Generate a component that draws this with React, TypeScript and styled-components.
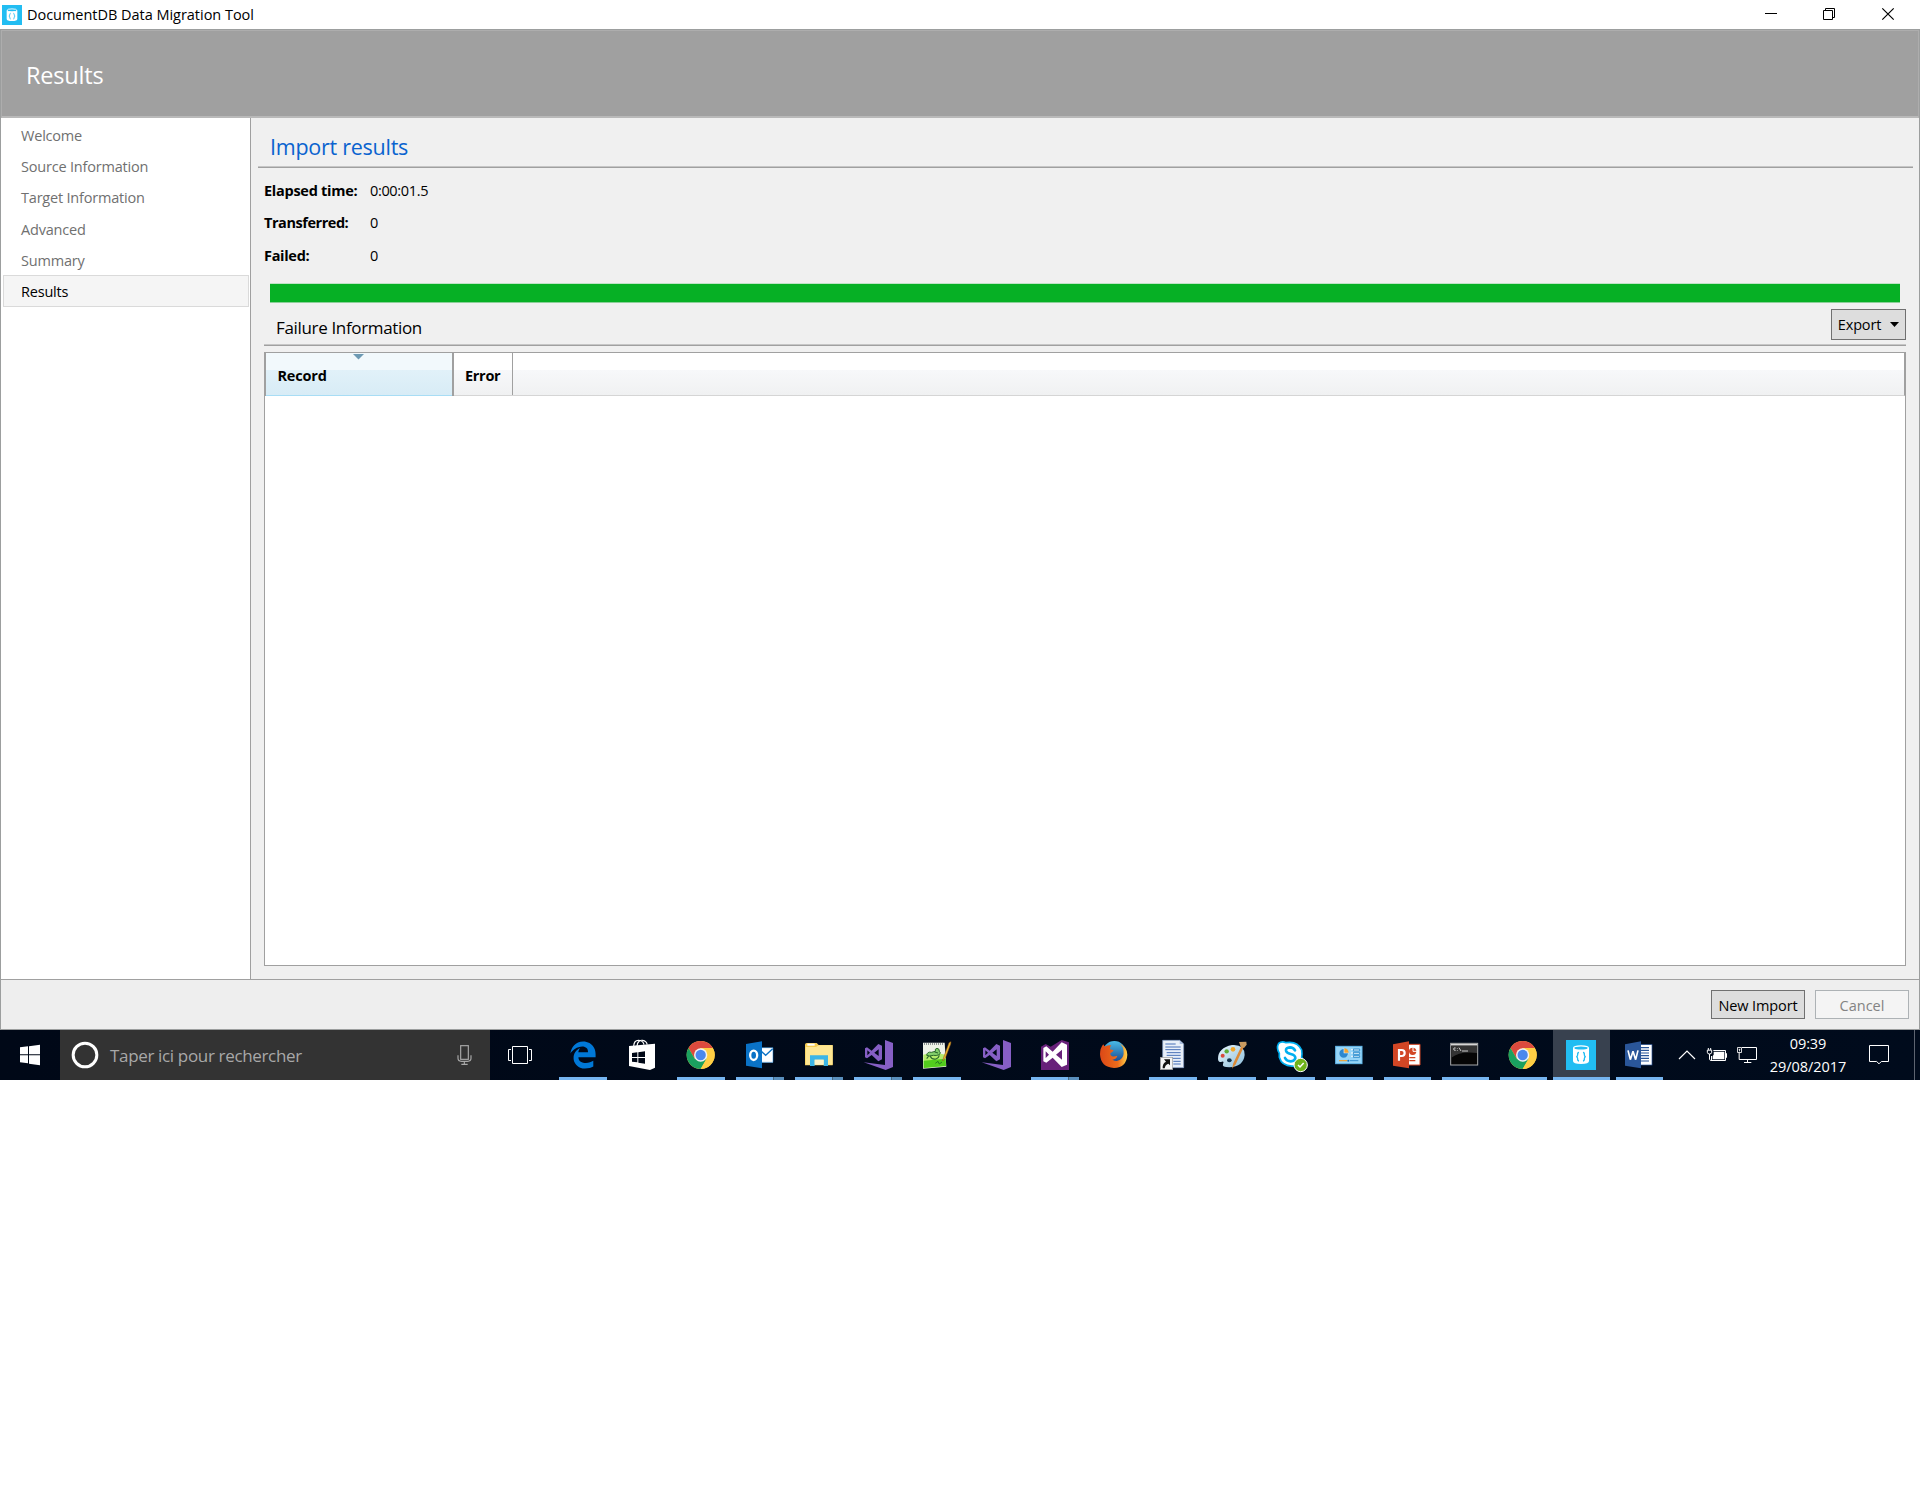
import React from "react";
import styled, { createGlobalStyle } from "styled-components";
import { FaEdgeLegacy } from "react-icons/fa";

const GlobalStyle = createGlobalStyle`
  * { box-sizing: border-box; }
  html, body { margin: 0; background: #fff; }
  body { font-family: "Open Sans", "Noto Sans", sans-serif; color: #000; }
`;

const Label = styled.span<{ $size?: number; $track?: number; $bold?: boolean; $color?: string }>`
  display: block;
  white-space: nowrap;
  font-size: ${(p) => p.$size ?? 14.5}px;
  letter-spacing: ${(p) => p.$track ?? 0}px;
  font-weight: ${(p) => (p.$bold ? 700 : 400)};
  color: ${(p) => p.$color ?? "#000"};
`;

const Screen = styled.div`
  width: 1920px;
  height: 1500px;
  overflow: hidden;
  display: flex;
  flex-direction: column;
  background: #fff;
`;

const TitleBar = styled.div`
  height: 29px;
  flex: none;
  display: flex;
  align-items: center;
  padding-left: 2px;
  gap: 5px;
`;

const WindowTitle = styled.div`
  padding-bottom: 1px;
`;

const WindowControls = styled.div`
  display: flex;
  margin-left: auto;
  padding-right: 2px;
`;

const ControlIcon = styled.svg`
  width: 59px;
  height: 29px;
  display: block;
`;

const WindowBody = styled.div`
  height: 1001px;
  flex: none;
  display: flex;
  flex-direction: column;
  border: 1px solid #9c9e9e;
  background: #f0f0f0;
`;

const Header = styled.header`
  height: 88px;
  flex: none;
  display: flex;
  align-items: center;
  padding: 2px 0 0 24px;
  background: #a0a0a0;
  border: 1px solid #adadad;
  border-bottom: 2px solid #b9b9b9;
`;

const Main = styled.div`
  flex: 1;
  display: flex;
  min-height: 0;
`;

const Sidebar = styled.nav`
  width: 250px;
  flex: none;
  background: #fff;
  border-right: 1px solid #a0a0a0;
  padding: 1px 1px 0 2px;
`;

const NavItem = styled.div<{ $active?: boolean }>`
  height: 31.25px;
  display: flex;
  align-items: center;
  padding: 1.5px 0 0 17px;
  border: 1px solid ${(p) => (p.$active ? "#dadada" : "transparent")};
  background: ${(p) => (p.$active ? "#f5f5f5" : "transparent")};
`;

const Content = styled.section`
  flex: 1;
  display: flex;
  flex-direction: column;
  padding: 0 6px 13px 7px;
`;

const PageTitle = styled.div`
  height: 50px;
  flex: none;
  display: flex;
  align-items: center;
  padding: 7px 0 0 12px;
  border-bottom: 1px solid #a0a0a0;
  box-shadow: inset 0 -1px 0 #c6c6c6;
`;

const Stats = styled.dl`
  margin: 6px 0 0 6px;
  display: grid;
  grid-template-columns: 106px auto;
  grid-auto-rows: 32.5px;
  align-items: center;
`;

const Term = styled.dt`
  margin: 0;
`;

const Value = styled.dd`
  margin: 0;
`;

const Progress = styled.div`
  margin: 11.5px 13px 0 12px;
  height: 20px;
  flex: none;
  background: #06b025;
  border-top: 1px solid #bfe3c6;
  border-bottom: 1px solid #8ccf99;
`;

const SectionHeader = styled.div`
  margin: 0 7px 0 6px;
  height: 43px;
  flex: none;
  display: flex;
  align-items: flex-start;
  justify-content: space-between;
  padding: 6px 0 0 12px;
  border-bottom: 1px solid #a0a0a0;
  box-shadow: inset 0 -1px 0 #c6c6c6;
`;

const SectionTitle = styled.div`
  padding-top: 7px;
`;

const Button = styled.button<{ $w: number; $h: number; $drop?: number; $disabled?: boolean }>`
  width: ${(p) => p.$w}px;
  height: ${(p) => p.$h}px;
  padding: ${(p) => p.$drop ?? 0}px 0 0;
  display: flex;
  align-items: center;
  justify-content: center;
  gap: 9px;
  font-family: inherit;
  border: 1px solid ${(p) => (p.$disabled ? "#adb2b5" : "#707070")};
  background: ${(p) => (p.$disabled ? "#f4f4f4" : "#dddddd")};
`;

const Caret = styled.svg`
  width: 9px;
  height: 5px;
  display: block;
`;

const Table = styled.div`
  margin: 6px 7px 0 6px;
  flex: 1;
  border: 1px solid #a0a0a0;
  background: #fff;
`;

const TableHead = styled.div`
  height: 43px;
  display: flex;
  border-right: 1px solid #a0a0a0;
  background: linear-gradient(#fff 0 17px, #f7f8fa 17px, #f0f1f2 42px);
  border-bottom: 1px solid #d5d5d5;
`;

const RecordCell = styled.div`
  width: 189px;
  height: 43px;
  display: flex;
  flex-direction: column;
  padding-left: 11.5px;
  border-left: 1px solid #a0a0a0;
  border-right: 2px solid #a0a0a0;
  background: linear-gradient(#f2f9fc 0 17px, #e1f1f9 17px, #d8ecf6 42px, #a8ddf5 42px);
`;

const SortMark = styled.svg`
  width: 11px;
  height: 6px;
  margin: 1px 0 6px 75.5px;
  display: block;
`;

const ErrorCell = styled.div`
  width: 59px;
  padding: 13px 0 0 11px;
  border-right: 1px solid #a0a0a0;
`;

const Footer = styled.footer`
  height: 50px;
  flex: none;
  display: flex;
  align-items: center;
  justify-content: flex-end;
  gap: 10px;
  padding-right: 10px;
  border-top: 1px solid #a0a0a0;
  background: #eee;
`;

const Taskbar = styled.div`
  height: 50px;
  flex: none;
  display: flex;
  background: linear-gradient(90deg, #000817, #000b1c);
`;

const StartButton = styled.div`
  width: 60px;
`;

const SearchBox = styled.div`
  width: 430px;
  display: flex;
  align-items: center;
  background: #333;
`;

const Glyph = styled.svg<{ $w: number; $h?: number }>`
  width: ${(p) => p.$w}px;
  height: ${(p) => p.$h ?? 50}px;
  flex: none;
  display: block;
`;

const MicGlyph = styled(Glyph)`
  margin-left: auto;
`;

const AppButton = styled.div<{ $w: number; $active?: boolean }>`
  width: ${(p) => p.$w}px;
  display: flex;
  flex-direction: column;
  background: ${(p) => (p.$active ? "#38414f" : "transparent")};
`;

const Running = styled.div<{ $inset: number; $w: number; $stacked?: boolean }>`
  height: 3px;
  margin-left: ${(p) => p.$inset}px;
  width: ${(p) => p.$w}px;
  background: ${(p) => (p.$stacked ? "linear-gradient(90deg, #76b5f0 37px, #47687f 37px 38px, #5a8fbd 38px)" : "#76b5f0")};
`;

const EdgeWrap = styled.div`
  height: 47px;
  display: flex;
  padding: 11px 0 0 15px;
`;

const Clock = styled.div`
  width: 102px;
  display: flex;
  flex-direction: column;
  align-items: center;
  padding-top: 2px;
  line-height: 23px;
`;

const ShowDesktop = styled.div`
  margin-left: auto;
  width: 6px;
  border-left: 1px solid #5d6470;
`;

/* Icon artwork uses a grid three times finer than the pixel grid. */

const ChromeArt = ({ cx, cy }: { cx: number; cy: number }) => (
  <g transform={`translate(${cx} ${cy})`}>
    <circle r="42" fill="#ffce44" />
    <path d="M-36.4 -21A42 42 0 0 1 36.4 -21L0 -21L-18.2 10.5Z" fill="#dc4a3e" />
    <path d="M-36.4 -21A42 42 0 0 0 0 42L18.2 10.5L-18.2 10.5Z" fill="#1aa15f" />
    <path d="M36.4 -21A42 42 0 0 1 0 42L18.2 10.5L0 -21Z" fill="#ffce44" />
    <circle r="20" fill="#f1f1f1" />
    <circle r="15.5" fill="#4a88ee" />
  </g>
);

const VsArt = ({ dx = 0 }: { dx?: number }) => (
  <g transform={`translate(${dx} 0)`} fill="#865fc5">
    <path d="M855 60L879 69V141L857 150L791 127L855 135Z" />
    <path fillRule="evenodd" d="M795 85L801 82L815 92L835 72L846 77V118L835 124L815 105L801 115L795 112ZM802 91V106L810 98ZM823 98L836 108V88Z" />
  </g>
);

const DbArt = ({ cx, cy }: { cx: number; cy: number }) => (
  <g transform={`translate(${cx} ${cy})`}>
    <rect x="-45" y="-45" width="90" height="90" fill="#22bdf2" />
    <path d="M-24 -21V18Q-24 27 0 27Q24 27 24 18V-21Z" fill="#fff" />
    <ellipse cy="-21" rx="22" ry="6.500" fill="#22bdf2" stroke="#fff" strokeWidth="4" />
    <path d="M-6 -8Q-11 -7 -10 -1Q-10 4 -14 5Q-10 6 -10 11Q-11 17 -6 18M6 -8Q11 -7 10 -1Q10 4 14 5Q10 6 10 11Q11 17 6 18" fill="none" stroke="#22bdf2" strokeWidth="4" />
  </g>
);

type AppEntry = { name: string; w: number; crop: number; x: number; art?: React.ReactNode; run?: "one" | "many" | "full" };

const apps: AppEntry[] = [
  { name: "edge", w: 59, crop: 300, x: 554, run: "one" },
  {
    name: "store", w: 59, crop: 600, x: 613,
    art: (
      <g>
        <path d="M101 78C103 52 130 60 132 74M111 78C114 50 143 62 141 74" fill="none" stroke="#fff" strokeWidth="3.500" />
        <path d="M87 78L165 71V143L150 150L87 138Z" fill="#fff" />
        <path d="M96 99L112 97V111H96ZM115 96.500L135 94V111H115ZM96 114H112V127L96 125ZM115 114H135V131L115 128Z" fill="#000817" />
      </g>
    ),
  },
  { name: "chrome", w: 59, crop: 600, x: 672, run: "one", art: <ChromeArt cx={302} cy={105} /> },
  {
    name: "outlook", w: 59, crop: 600, x: 731, run: "many",
    art: (
      <g>
        <rect x="480" y="83" width="39" height="45" fill="#fff" />
        <path d="M480 83H519V127H480" fill="none" stroke="#0a72c6" strokeWidth="1.500" />
        <path d="M482 92L497 106L518 86" fill="none" stroke="#0a72c6" strokeWidth="4" />
        <path d="M438 72L486 64V145L438 137Z" fill="#0a72c6" />
        <ellipse cx="461" cy="106" rx="10.500" ry="14" fill="none" stroke="#fff" strokeWidth="7" />
      </g>
    ),
  },
  {
    name: "explorer", w: 59, crop: 600, x: 790, run: "many",
    art: (
      <g>
        <path d="M615 74Q615 69 620 69H650L656 75H698V136H615Z" fill="#f7cd52" />
        <rect x="622" y="71" width="22" height="6" fill="#fff" />
        <path d="M617 81H648L656 76H698V134H617Z" fill="#ffe793" />
        <path d="M630 138V106H684V138H671V119H644V138Z" fill="#3db5e6" />
        <rect x="644" y="119" width="27" height="15" fill="#fdf3c8" />
      </g>
    ),
  },
  { name: "vs", w: 59, crop: 600, x: 849, run: "many", art: <VsArt /> },
  {
    name: "notepadpp", w: 59, crop: 920, x: 908, run: "one",
    art: (
      <g>
        <path d="M9 68L74 68L79 140L9 146Z" fill="#eef3e8" />
        <path d="M10 104Q40 96 76 104L78 138L11 144Z" fill="#b4ec6a" />
        <path d="M11 122L77 116L78 138L11 144Z" fill="#52cc1d" />
        <path d="M12 72H72" stroke="#6f757a" strokeWidth="5" strokeDasharray="3 3" />
        <path d="M20 106Q22 94 34 97L46 94Q44 86 51 85Q59 86 58 94Q64 98 58 104Q48 108 40 106Q28 110 20 106Z" fill="#84cf6c" stroke="#2c6a2c" strokeWidth="3" />
        <path d="M30 108Q36 120 48 117Q56 114 58 106M26 108L20 116M44 96L54 99" fill="none" stroke="#2c6a2c" strokeWidth="3.500" />
        <path d="M46 130L54 124L58 132L66 126" fill="none" stroke="#267a24" strokeWidth="3" />
        <path d="M68 123L71 112L87 68L93 65L92 72L76 114Z" fill="#edb52b" stroke="#86521c" strokeWidth="1.500" />
      </g>
    ),
  },
  { name: "vs-second", w: 59, crop: 920, x: 967, art: <VsArt dx={-606} /> },
  {
    name: "vs-classic", w: 59, crop: 920, x: 1026, run: "many",
    art: (
      <g>
        <path d="M363 80L377 72L392 80L425 60L447 67V150H363Z" fill="#68217a" />
        <path fillRule="evenodd" d="M370 84L379 79L398 95L425 67L441 74V134L425 141L398 113L379 128L370 124ZM377 94V114L387 104ZM408 104L426 119V89Z" fill="#fff" />
      </g>
    ),
  },
  {
    name: "firefox", w: 59, crop: 920, x: 1085,
    art: (
      <g>
        <defs>
          <linearGradient id="ffGlobe" x1="0" y1="0" x2="0" y2="1"><stop offset="0" stopColor="#49bce8" /><stop offset="1" stopColor="#133a84" /></linearGradient>
          <linearGradient id="ffTail" x1="0" y1="0" x2="1" y2="0"><stop offset="0" stopColor="#db4817" /><stop offset=".65" stopColor="#ec6c1b" /><stop offset="1" stopColor="#ffd24a" /></linearGradient>
        </defs>
        <circle cx="583" cy="98" r="35" fill="url(#ffGlobe)" />
        <path d="M550 73Q552 80 557 79Q565 74 574 76Q568 83 570 88L581 91Q579 96 571 100Q570 106 576 109Q584 110 592 107Q590 117 577 119Q594 129 606 114Q614 103 609 83Q602 73 598 70Q622 82 622 104Q620 142 582 144Q542 142 540 103Q540 84 550 73Z" fill="url(#ffTail)" />
      </g>
    ),
  },
  {
    name: "document-shortcut", w: 59, crop: 920, x: 1144, run: "one",
    art: (
      <g>
        <path d="M728 61H779L791 72V143H728Z" fill="#e8eff9" stroke="#7f99c2" strokeWidth="2" />
        <path d="M779 61V72H791Z" fill="#a9bddd" />
        <path d="M736 72H767M736 81H782M736 89H782M740 98H782M740 106H782M756 115H782M760 124H782M760 132H782" stroke="#466fb6" strokeWidth="3" />
        <rect x="721" y="112" width="37" height="37" fill="#f5f5f5" stroke="#9a9a9a" strokeWidth="2" />
        <path d="M728 145Q727 130 738 125L732 118H750V136L745 131Q735 135 734 145Z" fill="#111" />
      </g>
    ),
  },
  {
    name: "paint", w: 59, crop: 920, x: 1203, run: "one",
    art: (
      <g>
        <defs>
          <linearGradient id="palette" x1="0" y1="0" x2="1" y2="1"><stop offset="0" stopColor="#eaf6fc" /><stop offset="1" stopColor="#8bbedc" /></linearGradient>
        </defs>
        <path d="M894 116Q894 84 936 75Q974 72 974 105Q970 140 928 142Q905 142 909 132Q914 122 903 126Q894 126 894 116Z" fill="url(#palette)" />
        <circle cx="908" cy="107" r="6" fill="#d84a3e" />
        <circle cx="920" cy="94" r="6.500" fill="#5fae39" />
        <circle cx="939" cy="88" r="7" fill="#f2a72b" />
        <ellipse cx="928" cy="121" rx="7" ry="6" fill="#12304a" />
        <path d="M936 146L940 130L964 79L971 82L947 133Z" fill="#dd8a36" />
        <path d="M957 66L979 65L980 74L972 84L962 80Z" fill="#c99b61" />
      </g>
    ),
  },
  {
    name: "skype", w: 59, crop: 1240, x: 1262, run: "one",
    art: (
      <g>
        <path d="M116 70Q125 62 138 68Q172 62 185 90Q187 104 185 111Q195 130 180 139Q169 144 160 138Q126 140 118 112Q118 104 118 100Q108 84 116 70Z" fill="#fff" stroke="#00aff0" strokeWidth="5" />
        <path d="M165 91Q160 82 150 82Q137 83 138 92Q139 99 152 102Q166 105 166 114Q165 123 152 124Q140 124 135 114" fill="none" stroke="#00aff0" strokeWidth="8" strokeLinecap="round" />
        <circle cx="182" cy="135" r="20" fill="#6fb31a" stroke="#fff" strokeWidth="3" />
        <path d="M174 135L180 141L191 129" fill="none" stroke="#fff" strokeWidth="4.500" />
      </g>
    ),
  },
  {
    name: "monitor", w: 58, crop: 1240, x: 1321, run: "one",
    art: (
      <g>
        <rect x="287" y="79" width="79" height="52" fill="#96d5f8" stroke="#63b9ec" strokeWidth="3" />
        <circle cx="312" cy="99" r="13" fill="#e6f4fc" />
        <path d="M311 87A13 13 0 1 0 324 100H311Z" fill="#2b87cf" />
        <path d="M313 98V85A13 13 0 0 1 326 98Z" fill="#f2a331" />
        <path d="M334 89H339M334 99H339M334 109H339" stroke="#fff" strokeWidth="4" />
        <path d="M340 87H359V93H340ZM340 97H359V103H340ZM340 107H359V112H340Z" fill="#d8effb" stroke="#1f83c6" strokeWidth="2.500" />
        <path d="M297 122H322" stroke="#f2a331" strokeWidth="3.500" />
        <path d="M330 122H355" stroke="#2584ca" strokeWidth="2.500" />
        <circle cx="325" cy="122" r="3" fill="#176db5" />
      </g>
    ),
  },
  {
    name: "powerpoint", w: 58, crop: 1240, x: 1379, run: "one",
    art: (
      <g>
        <path d="M500 73H540V135H500Z" fill="#fff" stroke="#d24625" strokeWidth="3" />
        <circle cx="518" cy="94" r="11" fill="#d24625" />
        <path d="M519 82V94H531" fill="none" stroke="#fff" strokeWidth="3" />
        <path d="M508 113H526M508 122H526" stroke="#d24625" strokeWidth="4" />
        <path d="M459 73L507 64V145L459 137Z" fill="#d24625" />
        <path d="M477 122V90H485Q494 90 494 99Q494 108 485 108H477" fill="none" stroke="#fff" strokeWidth="6.500" />
      </g>
    ),
  },
  {
    name: "terminal", w: 58, crop: 1240, x: 1437, run: "one",
    art: (
      <g>
        <rect x="632" y="70" width="81" height="65" fill="#050505" stroke="#a7a9ab" strokeWidth="3" />
        <path d="M634 77H711V99Q660 93 634 113Z" fill="#333" />
        <path d="M633 74H712" stroke="#d5d5d5" strokeWidth="5" />
        <path d="M647 84Q641 82 641 87Q641 92 647 91M652 84V86M652 90V92M657 83L663 93M666 93H684" stroke="#e8e8e8" strokeWidth="2.500" fill="none" />
      </g>
    ),
  },
  { name: "chrome-second", w: 58, crop: 1240, x: 1495, run: "one", art: <ChromeArt cx={848} cy={105} /> },
  { name: "migration", w: 57, crop: 1540, x: 1553, run: "full", art: <DbArt cx={123} cy={105} /> },
  {
    name: "word", w: 59, crop: 1540, x: 1610, run: "one",
    art: (
      <g>
        <rect x="295" y="74" width="41" height="61" fill="#fff" stroke="#2a5699" strokeWidth="2" />
        <path d="M303 83H327M303 91H327M303 99H327M303 107H327M303 115H327M303 123H327" stroke="#2a5699" strokeWidth="3.500" />
        <path d="M255 73L303 64V145L255 137Z" fill="#2a5699" />
        <path d="M264 91L271 119L279 94L287 119L294 91" fill="none" stroke="#fff" strokeWidth="5" strokeLinejoin="bevel" />
      </g>
    ),
  },
];

const steps = ["Welcome", "Source Information", "Target Information", "Advanced", "Summary", "Results"];

export default function App() {
  return (
    <>
      <GlobalStyle />
      <Screen>
        <TitleBar>
          <Glyph $w={20} $h={20} viewBox="0 0 90 90"><DbArt cx={45} cy={45} /></Glyph>
          <WindowTitle><Label $track={-0.03}>DocumentDB Data Migration Tool</Label></WindowTitle>
          <WindowControls>
            <ControlIcon viewBox="0 0 59 29"><path d="M24 13.500H36" stroke="#000" /></ControlIcon>
            <ControlIcon viewBox="0 0 59 29"><path d="M23.500 10.500H32.500V19.500H23.500ZM25.500 10V8.500H34.500V17.500H33" fill="none" stroke="#000" /></ControlIcon>
            <ControlIcon viewBox="0 0 59 29"><path d="M23.300 8.300L34.700 19.700M34.700 8.300L23.300 19.700" stroke="#000" strokeWidth="1.200" /></ControlIcon>
          </WindowControls>
        </TitleBar>
        <WindowBody>
          <Header><Label $size={23.5} $color="#fff" $track={-0.2}>Results</Label></Header>
          <Main>
            <Sidebar>
              {steps.map((s) => (
                <NavItem key={s} $active={s === "Results"}>
                  <Label $color={s === "Results" ? "#000" : "#707070"} $track={-0.2}>{s}</Label>
                </NavItem>
              ))}
            </Sidebar>
            <Content>
              <PageTitle><Label $size={21.5} $color="#0a63cf" $track={-0.26}>Import results</Label></PageTitle>
              <Stats>
                <Term><Label $bold $track={-0.27}>Elapsed time:</Label></Term><Value><Label $track={-0.34}>0:00:01.5</Label></Value>
                <Term><Label $bold $track={-0.45}>Transferred:</Label></Term><Value><Label>0</Label></Value>
                <Term><Label $bold $track={-0.3}>Failed:</Label></Term><Value><Label>0</Label></Value>
              </Stats>
              <Progress />
              <SectionHeader>
                <SectionTitle><Label $size={17} $track={-0.34}>Failure Information</Label></SectionTitle>
                <Button $w={75} $h={31}>
                  <Label $track={-0.15}>Export</Label>
                  <Caret viewBox="0 0 9 5"><path d="M0 0H9L4.500 5Z" /></Caret>
                </Button>
              </SectionHeader>
              <Table>
                <TableHead>
                  <RecordCell>
                    <SortMark viewBox="0 0 11 6"><path d="M0 0H11L5.500 5.500Z" fill="#6d9ab3" /></SortMark>
                    <Label $bold $track={-0.2}>Record</Label>
                  </RecordCell>
                  <ErrorCell><Label $bold $track={-0.3}>Error</Label></ErrorCell>
                </TableHead>
              </Table>
            </Content>
          </Main>
          <Footer>
            <Button $w={94} $h={29} $drop={2}><Label $track={-0.1}>New Import</Label></Button>
            <Button $w={94} $h={29} $drop={2} $disabled><Label $color="#838383">Cancel</Label></Button>
          </Footer>
        </WindowBody>
        <Taskbar>
          <StartButton>
            <Glyph $w={60} viewBox="0 30 180 150"><path d="M60 82L84 79V103H60ZM87 78.500L120 74V103H87ZM60 106H84V130L60 127ZM87 106H120V136L87 131Z" fill="#fff" /></Glyph>
          </StartButton>
          <SearchBox>
            <Glyph $w={50} viewBox="180 30 150 150"><circle cx="255" cy="105" r="35.500" fill="none" stroke="#fff" strokeWidth="9" /></Glyph>
            <Label $size={17} $color="#a8a8a8" $track={-0.34}>Taper ici pour rechercher</Label>
            <MicGlyph $w={50} viewBox="420 30 150 150">
              <g fill="none" stroke="#a8a8a8" strokeWidth="3.500">
                <rect x="482" y="77" width="23" height="41" />
                <path d="M474 106V115Q474 124 484 124H503Q513 124 513 115V106M493 124V132M484 133H503" />
              </g>
            </MicGlyph>
          </SearchBox>
          <Glyph $w={64} viewBox="570 30 192 150">
            <path d="M637.500 79.500H682.500V130.500H637.500ZM633 88.500H625.500V121.500H633M687 88.500H694.500V121.500H687" fill="none" stroke="#fff" strokeWidth="3" />
          </Glyph>
          {apps.map((a) => (
            <AppButton key={a.name} $w={a.w} $active={a.run === "full"}>
              {a.art ? (
                <Glyph $w={a.w} $h={47} viewBox={`${(a.x - a.crop) * 3} 30 ${a.w * 3} 141`}>{a.art}</Glyph>
              ) : (
                <EdgeWrap><FaEdgeLegacy size={28} color="#0078d7" /></EdgeWrap>
              )}
              {a.run && (
                <Running
                  $inset={a.run === "full" ? 0 : a.name === "word" ? 6 : 5}
                  $w={a.run === "full" ? 57 : a.x > 1300 ? 47 : 48}
                  $stacked={a.run === "many"}
                />
              )}
            </AppButton>
          ))}
          <Glyph $w={88} viewBox="387 30 264 150">
            <path d="M417 117L441 93L465 117" fill="none" stroke="#fff" strokeWidth="3.500" />
            <path d="M520 91.500H556.500V121.500H514.500V108" fill="none" stroke="#fff" strokeWidth="3" />
            <path d="M521 95H553V118H518V108L521 104ZM557 100H561V113H557Z" fill="#fff" />
            <path d="M505 84V90M512 84V90M502 90.500H515V97Q515 102 508.500 102Q502 102 502 97ZM508.500 102V118Q508.500 122 516 121.500" fill="none" stroke="#fff" strokeWidth="3" />
            <path d="M606 82.500H649.500V118.500H597.500V98M622.500 119V127M612 127.500H634" fill="none" stroke="#fff" strokeWidth="3" />
            <path d="M592.500 82.500H604.500V97.500H592.500ZM596 88H601M598.500 88V94" fill="none" stroke="#fff" strokeWidth="2.500" />
          </Glyph>
          <Clock>
            <Label $color="#fff" $track={-0.1}>09:39</Label>
            <Label $color="#fff" $track={-0.05}>29/08/2017</Label>
          </Clock>
          <Glyph $w={44} viewBox="957 30 132 150">
            <path d="M988.500 76.500H1045.500V124.500H1024L1017 131.500L1010 124.500H988.500Z" fill="none" stroke="#fff" strokeWidth="3" />
          </Glyph>
          <ShowDesktop />
        </Taskbar>
      </Screen>
    </>
  );
}
